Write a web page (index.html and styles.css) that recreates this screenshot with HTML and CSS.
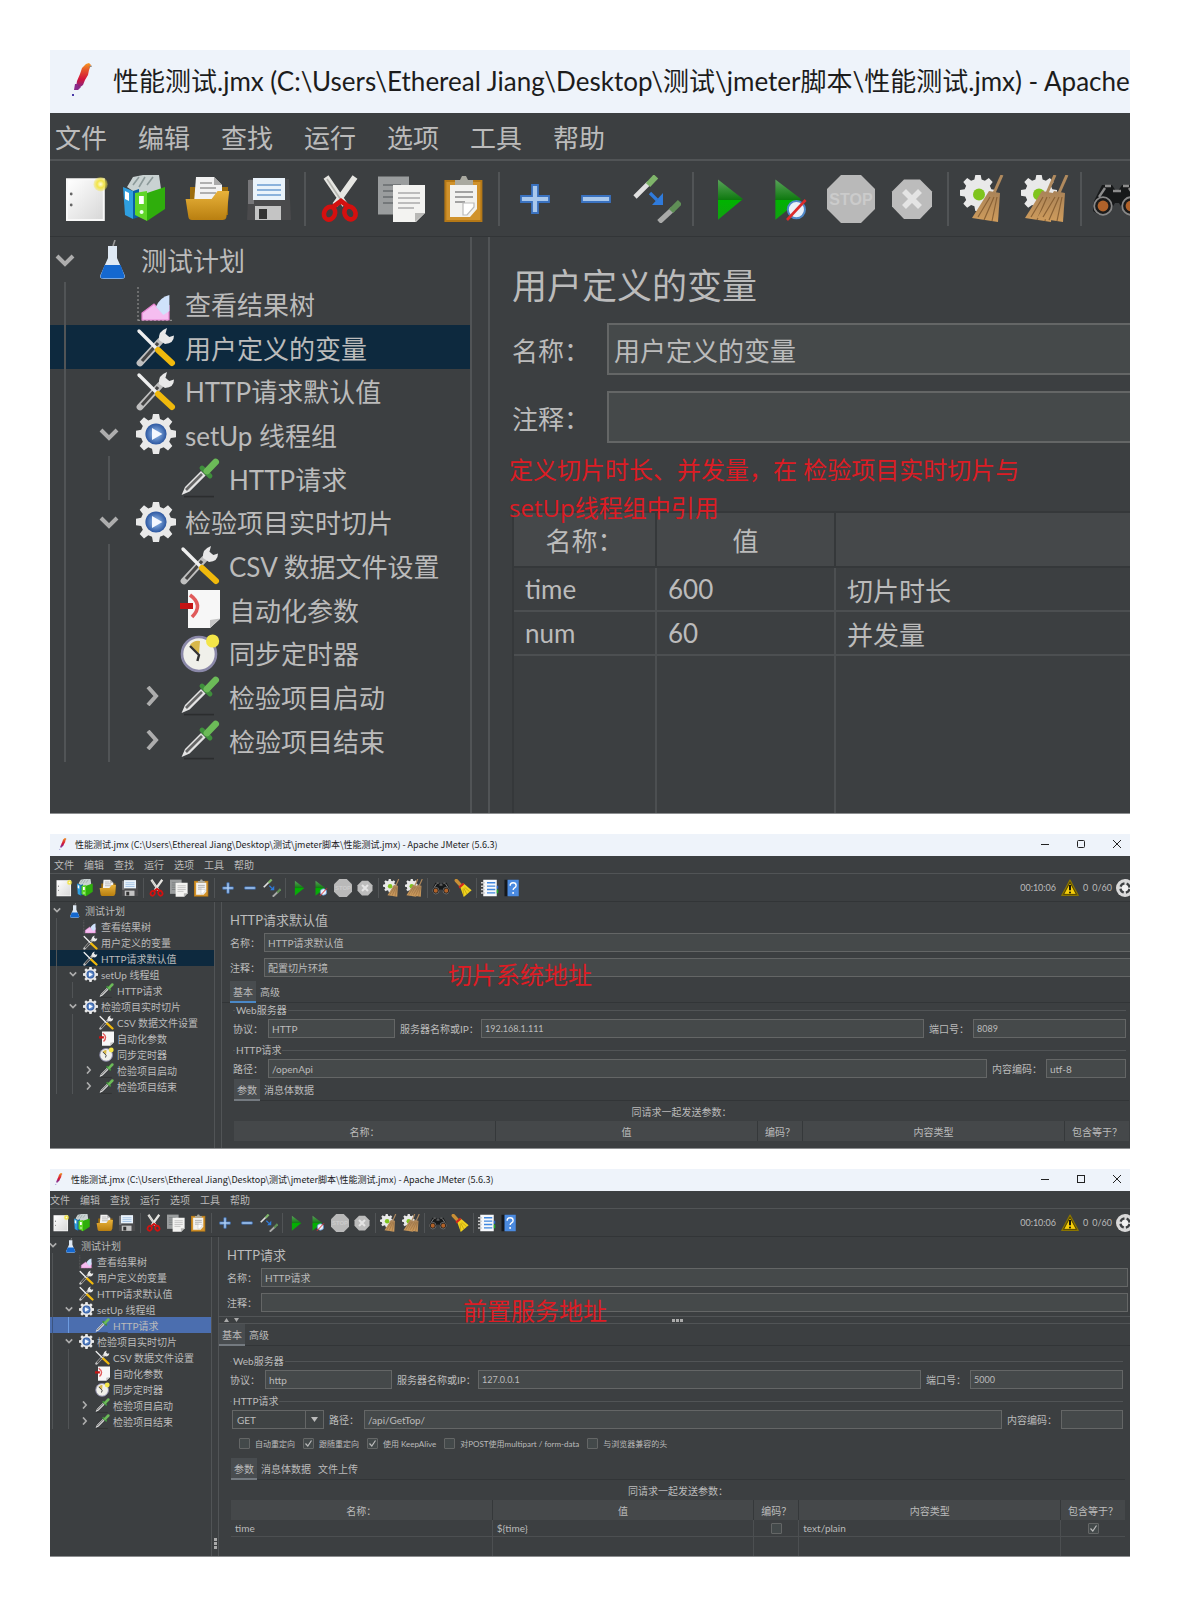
FILE: index.html
```html
<!DOCTYPE html>
<html lang="zh-CN">
<head>
<meta charset="utf-8">
<title>JMeter 性能测试</title>
<link rel="stylesheet" href="styles.css">
</head>
<body>
<svg class="sprite" aria-hidden="true">
  <defs>
    <linearGradient id="g-feather" x1="0" y1="0" x2="0" y2="1"><stop offset="0" stop-color="#f69923"/><stop offset=".3" stop-color="#e4502a"/><stop offset=".65" stop-color="#d2143c"/><stop offset="1" stop-color="#7d2a8c"/></linearGradient>
    <linearGradient id="g-page" x1="0" y1="0" x2="1" y2="1"><stop offset="0" stop-color="#fff"/><stop offset="1" stop-color="#d8d8d8"/></linearGradient>
    <linearGradient id="g-gold" x1="0" y1="0" x2="0" y2="1"><stop offset="0" stop-color="#e8b23a"/><stop offset="1" stop-color="#b97f10"/></linearGradient>
    <linearGradient id="g-play" x1="0" y1="0" x2="0" y2="1"><stop offset="0" stop-color="#5aa35a"/><stop offset=".5" stop-color="#0f7a10"/><stop offset=".52" stop-color="#00b400"/><stop offset="1" stop-color="#12a012"/></linearGradient>
    <linearGradient id="g-broom" x1="0" y1="0" x2="0" y2="1"><stop offset="0" stop-color="#a98358"/><stop offset="1" stop-color="#cf9c5c"/></linearGradient>
    <radialGradient id="g-blue"><stop offset="0" stop-color="#9cc3f0"/><stop offset="1" stop-color="#2b56a0"/></radialGradient>
    <radialGradient id="g-sun"><stop offset="0" stop-color="#fffde0"/><stop offset=".5" stop-color="#f3e548"/><stop offset="1" stop-color="#f3e548" stop-opacity=".3"/></radialGradient>
  </defs>

  <symbol id="i-feather" viewBox="0 0 20 34"><path d="m14 1 3-1 2 2-2 5-1 5-3 5-2 5-4 3-3-1 1-6 3-7 2-6z" fill="url(#g-feather)"/><path d="M3 21h3v3h3l-3 3H2z" fill="#8a2a8a"/><rect x="0" y="31" width="2" height="2" fill="#4a3aa8"/><path d="m17 4 3-1" stroke="#888"/></symbol>

  <symbol id="i-new" viewBox="0 0 24 24"><path d="M2 1.600h19.400V23H2z" fill="#f8f8f8"/><path d="M3 2.600h17.400V22H3z" fill="url(#g-page)"/><circle cx="4.600" cy="9.500" r=".7" fill="#666"/><circle cx="4.600" cy="15" r=".7" fill="#666"/><circle cx="19.300" cy="4.600" r="3.600" fill="url(#g-sun)"/></symbol>

  <symbol id="i-templates" viewBox="0 0 24 24"><path d="M2 6 5 1l5-1 8 0 1 7-8 5z" fill="#c9d2d2"/><path d="m5 5 3-4m0 5 3-5m1 4 3-4" stroke="#8c9a9a" stroke-width=".8"/><path d="M0 6l5 2v14l-4-2z" fill="#2f9fe0"/><path d="m5 8 3-1v14l-3 1z" fill="#0b5fa5"/><path d="m1 8 2 1v4l-2-1z" fill="#fff"/><path d="m6 9 6-1 0 15-6-3z" fill="#5fd628"/><path d="m12 9 9-3v11l-9 6z" fill="#2fae0c"/><path d="M8 10.500h2.400v4H8z" fill="#fff"/><circle cx="9.300" cy="18.500" r="1" fill="#eaffea"/></symbol>

  <symbol id="i-open" viewBox="0 0 24 24"><path d="M3 6h19v14H3z" fill="#9c6c0c"/><path d="M6 1h9l4 4v9H5z" fill="#f2f2f2"/><path d="M8 4h6M8 6.500h8M8 9h8" stroke="#999" stroke-width=".8"/><path d="M15 1v4h4z" fill="#aaa"/><path d="M.8 12h13l3-4h3.600l2.200 0-1.400 13q-.2 1.500-2 1.500H4q-1.600 0-1.800-1.500z" fill="url(#g-gold)"/></symbol>

  <symbol id="i-save" viewBox="0 0 24 24"><path d="M2 2h20l1 20.500H1z" fill="#4a4a4c"/><path d="M1.500 2.500h3v12h-3z" fill="#77777a"/><path d="M4 1.500h16v11H4z" fill="#eaf3fb"/><path d="M6 5h12M6 7.500h12M6 10h12" stroke="#8bb2dc" stroke-width=".9"/><path d="M5 15.500h13v7H5z" fill="#c4c4c4"/><path d="M7 17h4v5H7z" fill="#333"/></symbol>

  <symbol id="i-cut" viewBox="0 0 24 24"><path d="M4.500 1 14 15M19 1 9 15" stroke="#e6e6e2" stroke-width="3"/><path d="m5 2 8 12" stroke="#b5b5b0" stroke-width=".8"/><ellipse cx="6.300" cy="19" rx="2.700" ry="3.300" fill="none" stroke="#d4100f" stroke-width="2.300" transform="rotate(25 6 19)"/><ellipse cx="16.500" cy="19" rx="2.700" ry="3.300" fill="none" stroke="#d4100f" stroke-width="2.300" transform="rotate(-25 16.500 19)"/><path d="m8 16 4-3 4 3" fill="none" stroke="#d4100f" stroke-width="2.400"/></symbol>

  <symbol id="i-copy" viewBox="0 0 24 24"><path d="M0 .8h15.500v19H0z" fill="#9a9d9e"/><path d="M2.500 5h9M2.500 8h5M2.500 11h5M2.500 14h5" stroke="#74787a"/><path d="M7.500 5h16v14l-4.500 4.500H7.500z" fill="#f3f3f1"/><path d="M10 9h11M10 11.500h11M10 14h11M10 16.500h8" stroke="#aaa" stroke-width=".8"/><path d="M18.500 23.500V19h5z" fill="#b8b8b6"/></symbol>

  <symbol id="i-paste" viewBox="0 0 24 24"><path d="M2.700 2.500h19v21h-19z" fill="#b57816"/><path d="M3.700 3.500h17v19h-17z" fill="#d0922c"/><path d="M5.500 5h13.500v12l-3.500 4H5.500z" fill="#f2f2f0"/><path d="M8 8.500h9M8 11h9M8 13.500h5" stroke="#888" stroke-width=".8"/><path d="M12 14h5.500v2L14 20h-2z" fill="#fff" stroke="#bbb" stroke-width=".6"/><path d="M8 5V2.500h2.500l1-2h2l1 2H17V5z" fill="#a9a9a0"/></symbol>

  <symbol id="i-plus" viewBox="0 0 24 24"><path d="M10.500 5h3v5.500H19v3h-5.500V19h-3v-5.500H5v-3h5.500z" fill="#a9c8ec" stroke="#3a72c0" stroke-width=".9"/></symbol>
  <symbol id="i-minus" viewBox="0 0 24 24"><path d="M5 10.500h14v3H5z" fill="#a9c8ec" stroke="#3a72c0" stroke-width=".9"/></symbol>

  <symbol id="i-toggle" viewBox="0 0 24 24"><path d="M1 11 8 4" stroke="#e0e0e0" stroke-width="2.300"/><path d="m7.500 5 4-4.300" stroke="#7fb56a" stroke-width="3"/><path d="M13 23.500 20 17" stroke="#a9aaa9" stroke-width="2.600"/><path d="m19 18 4.500-4.500" stroke="#5f8f56" stroke-width="3"/><path d="m8.500 9 3.500 3.500" stroke="#2f7bdc" stroke-width="1.600"/><path d="M15 9v6H9.500z" fill="#2f7bdc"/></symbol>

  <symbol id="i-play" viewBox="0 0 24 24"><path d="M6.500 2.200 19 12 6.500 22.400z" fill="url(#g-play)"/></symbol>
  <symbol id="i-playnow" viewBox="0 0 24 24"><path d="M4.700 2.200 17.500 12 4.700 22.400z" fill="url(#g-play)"/><circle cx="15.200" cy="17.300" r="4.300" fill="#e9f1fa" stroke="#4f88c8"/><path d="m10.500 22.500 9.300-10" stroke="#dc2b2b" stroke-width="1.300"/></symbol>

  <symbol id="i-stop" viewBox="0 0 24 24"><path d="M7 0h10l7 7v10l-7 7H7l-7-7V7z" fill="#b9b9b9"/></symbol>
  <symbol id="i-shutdown" viewBox="0 0 24 24"><path d="M8 2.200h8l6 6v7.600l-6 6.200H8l-6-6.200V8.200z" fill="#bcbcbc"/><path d="m8 8 8 8m0-8-8 8" stroke="#e4e4e4" stroke-width="2.800"/></symbol>

  <symbol id="i-cog" viewBox="0 0 24 24"><path d="M10.200 0h3.600l.6 3 2.200.9L19.200 2l2.600 2.700-1.900 2.500 1 2.300 3.100.5v3.900l-3.100.5-1 2.300 1.900 2.500-2.600 2.700-2.600-1.900-2.200.9-.6 3.100h-3.600l-.6-3.100-2.200-.9-2.600 1.900-2.600-2.700 1.900-2.500-1-2.300L0 13.900V10l3.100-.5 1-2.300-1.900-2.500L4.800 2l2.600 1.900L9.600 3z" fill="#e9e9e9"/></symbol>
  <symbol id="i-broom1" viewBox="0 0 24 24"><path d="M21 0 17 9" stroke="#b08a5e" stroke-width="1.500"/><path d="M14.500 8 20 9l-1 14.500L6 21.500z" fill="url(#g-broom)"/><path d="M15 11 9 21m8-10-5 11.500M18.500 11 16 23" stroke="#8a6236" stroke-width=".6"/></symbol>

  <symbol id="i-clear" viewBox="0 0 24 24"><use href="#i-cog" width="18" height="18"/><circle cx="9.500" cy="9.800" r="3" fill="#7fc41c"/><use href="#i-broom1" width="24" height="24"/></symbol>
  <symbol id="i-clearall" viewBox="0 0 24 24"><use href="#i-cog" width="18" height="18"/><circle cx="9" cy="9.800" r="3" fill="#7fc41c"/><use href="#i-broom1" x="-4" width="24" height="24"/><use href="#i-broom1" x="2" width="24" height="24"/></symbol>

  <symbol id="i-find" viewBox="0 0 24 24"><path d="M4.500 5h5l2 3h1l2-3h5l4 8 .5 5-3 2-5-1-3-5h-2l-3 5-5 1-3-2 .5-5z" fill="#17191a"/><path d="M3 11 6 6.500m12 0 3 4.500M10 8h4M6 5.500h3m6 0h3" stroke="#8c8c8c" stroke-width="1.200"/><circle cx="5" cy="15.500" r="4.400" fill="#1b1b1b" stroke="#888" stroke-width=".9"/><circle cx="5" cy="15.500" r="2.700" fill="#b0622a"/><circle cx="19" cy="15.500" r="4.400" fill="#1b1b1b" stroke="#888" stroke-width=".9"/><circle cx="19" cy="15.500" r="2.700" fill="#b0622a"/></symbol>

  <symbol id="i-sweep" viewBox="0 0 24 24"><path d="m3 2 6 6.500" stroke="#c98f35" stroke-width="4.500" stroke-linecap="round"/><path d="M8 10 13 6l10.500 9L13 24z" fill="#efd31f"/><path d="m13 22-1-9m5 7-4-8m8 5-7-6" stroke="#c2a20c"/><path d="m6 10 6-5 2 2-6.500 5.500z" fill="#d2281e"/></symbol>

  <symbol id="i-list" viewBox="0 0 24 24"><path d="M3 1h18v22H3z" fill="#f6f8fb"/><path d="M8 5h11M8 9.500h11M8 14h11M8 18.500h11" stroke="#3f86de" stroke-width="1.800"/><path d="M0 5h5M0 9.500h5M0 14h5M0 18.500h5" stroke="#c9c9c9" stroke-width="2"/><path d="M21 9h2v4h-2z" fill="#2a6ad0"/><path d="M21 14h2v5h-2z" fill="#1fae2a"/></symbol>
  <symbol id="i-help" viewBox="0 0 24 24"><path d="M2 1h5v22H2z" fill="#15181c"/><path d="M6 1h15v22H6z" fill="#4a8ae0"/><path d="M9.500 9q0-4 4-4t4 3.600q0 2-2.200 3.200-1.800 1-1.800 3" fill="none" stroke="#fff" stroke-width="1.800"/><circle cx="13.500" cy="18.500" r="1.300" fill="#fff"/></symbol>

  <symbol id="i-warn" viewBox="0 0 24 24"><path d="M12 1.500 23 22H1z" fill="#8a7400" stroke="#8a7400" stroke-width="1.600" stroke-linejoin="round"/><path d="M12 4.500 20.500 20.500h-17z" fill="#f5cd0a" stroke="#2c2600"/><path d="M12 8v7" stroke="#111" stroke-width="2.600"/><circle cx="12" cy="18" r="1.300" fill="#111"/></symbol>
  <symbol id="i-round" viewBox="0 0 24 24"><circle cx="12" cy="12" r="12" fill="#d9d9d9"/><circle cx="12" cy="12" r="6.200" fill="none" stroke="#3c3f41" stroke-width="3" stroke-dasharray="6.740 3" stroke-dashoffset="-1.500"/><circle cx="12" cy="12" r="4" fill="#f2f2f2"/></symbol>

  <symbol id="t-flask" viewBox="0 0 20 20"><path d="m10.500 3 1-3" stroke="#999" stroke-width=".8"/><path d="M8 3h4.500v6l4 9q0 1.500-2 1.500H6q-2 0-2-1.500l4-9z" fill="#dfe9f4"/><path d="M6.300 12.500h8l2 5.500q0 1.300-1.500 1.300H5.700q-1.500 0-1.500-1.300z" fill="#1468d0"/></symbol>
  <symbol id="t-chart" viewBox="0 0 20 20"><path d="M1 2v17M1 18.700h17" stroke="#8c8c8c" stroke-width=".6" stroke-dasharray="1 1"/><path d="M3 18.500V15l6-4.500 4 4 3.500-3v7z" fill="#f5bdf0" stroke="#e583d0" stroke-width=".6"/><path d="M10 12q2-5 6.700-6v8l-3 2z" fill="#cfe2fb"/></symbol>
  <symbol id="t-tools" viewBox="0 0 20 20"><path d="m2 18 12-13" stroke="#bfbfbf" stroke-width="3.400" stroke-linecap="round"/><path d="m3 17 8-9" stroke="#444" stroke-width="1.600"/><path d="M11.500 6.500q-.5-4.500 4-6l-.8 3 2 1.500 2.300-.8q0 4-4.500 4.300z" fill="#e8e8e8"/><path d="m1.500 2 9 9" stroke="#efefef" stroke-width="1.700" stroke-linecap="round"/><path d="m11 11.500 7 6.500" stroke="#f0b90c" stroke-width="3" stroke-linecap="round"/></symbol>
  <symbol id="t-gear" viewBox="0 0 20 20"><use href="#i-cog" width="20" height="20"/><circle cx="10" cy="10" r="5.300" fill="url(#g-blue)"/><path d="m8 7 5.200 3L8 13z" fill="#f4f8ff"/></symbol>
  <symbol id="t-dropper" viewBox="0 0 20 20"><path d="M2 19.300h15" stroke="#2b2d2e" stroke-width=".8"/><path d="M.8 18.500 2.500 14.500l8-8 2.300 2.300-8 8z" fill="#e4e4e4"/><path d="m3 16 8-8" stroke="#666" stroke-width="1.300"/><path d="m11 5 4 4" stroke="#3f8f3c" stroke-width="2.400" stroke-linecap="round"/><path d="m13.500 6.500 4.300-4.500" stroke="#6cbb58" stroke-width="3.400" stroke-linecap="round"/></symbol>
  <symbol id="t-param" viewBox="0 0 20 20"><path d="M4 .5h16V15l-5 4.500H4z" fill="#f7f7f7"/><path d="M15 19.500V15.500l5-.8z" fill="#c4c4c4"/><path d="M5 3q7 5 1 11" fill="none" stroke="#e05a5a" stroke-width="1.800"/><path d="M0 8.500h6.500" stroke="#c41414" stroke-width="3"/></symbol>
  <symbol id="t-timer" viewBox="0 0 20 20"><circle cx="9.500" cy="10.500" r="8.500" fill="#f0f0ea" stroke="#8a88a8" stroke-width="1.300"/><path d="M9.500 10.500 5 6q2-2.500 5-2z" fill="#d8b84a"/><path d="M5 6.500 9.500 11l-.8 3" fill="none" stroke="#333" stroke-width="1.200"/><circle cx="16.300" cy="4" r="3.300" fill="#f3e548"/></symbol>
  <symbol id="c-down" viewBox="0 0 20 20"><path d="m2 6 8 8 8-8" fill="none" stroke="#adadad" stroke-width="4"/></symbol>
  <symbol id="c-right" viewBox="0 0 20 20"><path d="m5 1 8 9-8 9" fill="none" stroke="#adadad" stroke-width="4"/></symbol>
</svg>

<main class="page">

<section class="win win-large">
  <header class="titlebar">
    <svg class="feather"><use href="#i-feather"/></svg>
    <span class="title">性能测试.jmx (C:\Users\Ethereal Jiang\Desktop\测试\jmeter脚本\性能测试.jmx) - Apache</span>
  </header>
  <nav class="menubar"><button>文件</button><button>编辑</button><button>查找</button><button>运行</button><button>选项</button><button>工具</button><button>帮助</button></nav>
  <div class="toolbar">
    <button aria-label="新建"><svg><use href="#i-new"/></svg></button>
    <button aria-label="模板"><svg><use href="#i-templates"/></svg></button>
    <button aria-label="打开"><svg><use href="#i-open"/></svg></button>
    <button aria-label="保存"><svg><use href="#i-save"/></svg></button>
    <span class="sep"></span>
    <button aria-label="剪切"><svg><use href="#i-cut"/></svg></button>
    <button aria-label="复制"><svg><use href="#i-copy"/></svg></button>
    <button aria-label="粘贴"><svg><use href="#i-paste"/></svg></button>
    <span class="sep"></span>
    <button aria-label="展开"><svg><use href="#i-plus"/></svg></button>
    <button aria-label="折叠"><svg><use href="#i-minus"/></svg></button>
    <button aria-label="切换"><svg><use href="#i-toggle"/></svg></button>
    <span class="sep"></span>
    <button aria-label="启动"><svg><use href="#i-play"/></svg></button>
    <button aria-label="不停顿开始"><svg><use href="#i-playnow"/></svg></button>
    <button aria-label="停止"><svg viewBox="0 0 24 24"><use href="#i-stop" width="24" height="24"/><text x="12" y="15" text-anchor="middle" class="stop-word">STOP</text></svg></button>
    <button aria-label="关闭"><svg><use href="#i-shutdown"/></svg></button>
    <span class="sep"></span>
    <button aria-label="清除"><svg><use href="#i-clear"/></svg></button>
    <button aria-label="清除全部"><svg><use href="#i-clearall"/></svg></button>
    <span class="sep"></span>
    <button aria-label="查找"><svg><use href="#i-find"/></svg></button>
  </div>
  <div class="body">
    <ul class="tree">
      <li><svg class="chev"><use href="#c-down"/></svg><svg class="ico"><use href="#t-flask"/></svg><span>测试计划</span></li>
      <li class="l1"><i class="chev"></i><svg class="ico"><use href="#t-chart"/></svg><span>查看结果树</span></li>
      <li class="l1 selected"><i class="chev"></i><svg class="ico"><use href="#t-tools"/></svg><span>用户定义的变量</span></li>
      <li class="l1"><i class="chev"></i><svg class="ico"><use href="#t-tools"/></svg><span>HTTP请求默认值</span></li>
      <li class="l1"><svg class="chev"><use href="#c-down"/></svg><svg class="ico"><use href="#t-gear"/></svg><span>setUp 线程组</span></li>
      <li class="l2"><i class="chev"></i><svg class="ico"><use href="#t-dropper"/></svg><span>HTTP请求</span></li>
      <li class="l1"><svg class="chev"><use href="#c-down"/></svg><svg class="ico"><use href="#t-gear"/></svg><span>检验项目实时切片</span></li>
      <li class="l2"><i class="chev"></i><svg class="ico"><use href="#t-tools"/></svg><span>CSV 数据文件设置</span></li>
      <li class="l2"><i class="chev"></i><svg class="ico"><use href="#t-param"/></svg><span>自动化参数</span></li>
      <li class="l2"><i class="chev"></i><svg class="ico"><use href="#t-timer"/></svg><span>同步定时器</span></li>
      <li class="l2"><svg class="chev"><use href="#c-right"/></svg><svg class="ico"><use href="#t-dropper"/></svg><span>检验项目启动</span></li>
      <li class="l2"><svg class="chev"><use href="#c-right"/></svg><svg class="ico"><use href="#t-dropper"/></svg><span>检验项目结束</span></li>
    </ul>
    <div class="divider"></div>
    <div class="pane">
      <h2>用户定义的变量</h2>
      <div class="field"><label for="a-name">名称：</label><input id="a-name" class="grow" value="用户定义的变量"></div>
      <div class="field"><label for="a-note">注释：</label><input id="a-note" class="grow"></div>
      <table class="grid vars">
        <colgroup><col class="v-name"><col class="v-value"><col></colgroup>
        <thead><tr><th>名称：</th><th>值</th><th></th></tr></thead>
        <tbody>
          <tr><td>time</td><td>600</td><td>切片时长</td></tr>
          <tr><td>num</td><td>60</td><td>并发量</td></tr>
          <tr class="filler"><td></td><td></td><td></td></tr>
        </tbody>
      </table>
    </div>
  </div>
  <p class="note note-a">定义切片时长、并发量，在 检验项目实时切片与<br>setUp线程组中引用</p>
</section>

<section class="win win-small">
  <header class="titlebar">
    <svg class="feather"><use href="#i-feather"/></svg>
    <span class="title">性能测试.jmx (C:\Users\Ethereal Jiang\Desktop\测试\jmeter脚本\性能测试.jmx) - Apache JMeter (5.6.3)</span>
    <span class="controls">
      <button aria-label="最小化"><svg viewBox="0 0 10 10"><path d="M1 5.500h8"/></svg></button>
      <button aria-label="最大化"><svg viewBox="0 0 10 10"><rect x="1.500" y="1.500" width="7" height="7" rx="1"/></svg></button>
      <button aria-label="关闭"><svg viewBox="0 0 10 10"><path d="m1 1 8 8m0-8-8 8"/></svg></button>
    </span>
  </header>
  <nav class="menubar"><button>文件</button><button>编辑</button><button>查找</button><button>运行</button><button>选项</button><button>工具</button><button>帮助</button></nav>
  <div class="toolbar">
    <button aria-label="新建"><svg><use href="#i-new"/></svg></button>
    <button aria-label="模板"><svg><use href="#i-templates"/></svg></button>
    <button aria-label="打开"><svg><use href="#i-open"/></svg></button>
    <button aria-label="保存"><svg><use href="#i-save"/></svg></button>
    <span class="sep"></span>
    <button aria-label="剪切"><svg><use href="#i-cut"/></svg></button>
    <button aria-label="复制"><svg><use href="#i-copy"/></svg></button>
    <button aria-label="粘贴"><svg><use href="#i-paste"/></svg></button>
    <span class="sep"></span>
    <button aria-label="展开"><svg><use href="#i-plus"/></svg></button>
    <button aria-label="折叠"><svg><use href="#i-minus"/></svg></button>
    <button aria-label="切换"><svg><use href="#i-toggle"/></svg></button>
    <span class="sep"></span>
    <button aria-label="启动"><svg><use href="#i-play"/></svg></button>
    <button aria-label="不停顿开始"><svg><use href="#i-playnow"/></svg></button>
    <button aria-label="停止"><svg viewBox="0 0 24 24"><use href="#i-stop" width="24" height="24"/><text x="12" y="15" text-anchor="middle" class="stop-word">STOP</text></svg></button>
    <button aria-label="关闭"><svg><use href="#i-shutdown"/></svg></button>
    <span class="sep"></span>
    <button aria-label="清除"><svg><use href="#i-clear"/></svg></button>
    <button aria-label="清除全部"><svg><use href="#i-clearall"/></svg></button>
    <span class="sep"></span>
    <button aria-label="查找"><svg><use href="#i-find"/></svg></button>
    <button aria-label="清除查找"><svg><use href="#i-sweep"/></svg></button>
    <span class="sep"></span>
    <button aria-label="函数助手"><svg><use href="#i-list"/></svg></button>
    <button aria-label="帮助"><svg><use href="#i-help"/></svg></button>
    <div class="status"><span class="clock">00:10:06</span><svg><use href="#i-warn"/></svg><span>0</span><span>0/60</span><svg><use href="#i-round"/></svg></div>
  </div>
  <div class="body">
    <ul class="tree">
      <li><svg class="chev"><use href="#c-down"/></svg><svg class="ico"><use href="#t-flask"/></svg><span>测试计划</span></li>
      <li class="l1"><i class="chev"></i><svg class="ico"><use href="#t-chart"/></svg><span>查看结果树</span></li>
      <li class="l1"><i class="chev"></i><svg class="ico"><use href="#t-tools"/></svg><span>用户定义的变量</span></li>
      <li class="l1 selected"><i class="chev"></i><svg class="ico"><use href="#t-tools"/></svg><span>HTTP请求默认值</span></li>
      <li class="l1"><svg class="chev"><use href="#c-down"/></svg><svg class="ico"><use href="#t-gear"/></svg><span>setUp 线程组</span></li>
      <li class="l2"><i class="chev"></i><svg class="ico"><use href="#t-dropper"/></svg><span>HTTP请求</span></li>
      <li class="l1"><svg class="chev"><use href="#c-down"/></svg><svg class="ico"><use href="#t-gear"/></svg><span>检验项目实时切片</span></li>
      <li class="l2"><i class="chev"></i><svg class="ico"><use href="#t-tools"/></svg><span>CSV 数据文件设置</span></li>
      <li class="l2"><i class="chev"></i><svg class="ico"><use href="#t-param"/></svg><span>自动化参数</span></li>
      <li class="l2"><i class="chev"></i><svg class="ico"><use href="#t-timer"/></svg><span>同步定时器</span></li>
      <li class="l2"><svg class="chev"><use href="#c-right"/></svg><svg class="ico"><use href="#t-dropper"/></svg><span>检验项目启动</span></li>
      <li class="l2"><svg class="chev"><use href="#c-right"/></svg><svg class="ico"><use href="#t-dropper"/></svg><span>检验项目结束</span></li>
    </ul>
    <div class="divider"></div>
    <div class="pane">
      <h2>HTTP请求默认值</h2>
      <div class="field"><label for="b-name">名称：</label><input id="b-name" class="grow bleed" value="HTTP请求默认值"></div>
      <div class="field"><label for="b-note">注释：</label><input id="b-note" class="grow bleed" value="配置切片环境"></div>
      <div class="tabs tabs-main"><button class="on focus">基本</button><button>高级</button></div>
      <fieldset>
        <legend>Web服务器</legend>
        <div class="field"><label for="b-proto">协议：</label><input id="b-proto" class="proto" value="HTTP"><label for="b-host" class="w-host">服务器名称或IP：</label><input id="b-host" class="grow num" value="192.168.1.111"><label for="b-port" class="w-port">端口号：</label><input id="b-port" class="port num" value="8089"></div>
      </fieldset>
      <fieldset>
        <legend>HTTP请求</legend>
        <div class="field"><label for="b-path">路径：</label><input id="b-path" class="grow" value="/openApi"><label for="b-enc" class="w-enc">内容编码：</label><input id="b-enc" class="enc" value="utf-8"></div>
      </fieldset>
      <div class="params">
        <div class="tabs"><button class="on">参数</button><button>消息体数据</button></div>
        <p class="caption">同请求一起发送参数：</p>
        <table class="grid">
          <colgroup><col><col><col class="p-enc"><col><col class="p-eq"></colgroup>
          <thead><tr><th>名称：</th><th>值</th><th>编码？</th><th>内容类型</th><th>包含等于？</th></tr></thead>
        </table>
      </div>
    </div>
  </div>
  <p class="note note-b">切片系统地址</p>
</section>

<section class="win win-small shifted">
  <header class="titlebar">
    <svg class="feather"><use href="#i-feather"/></svg>
    <span class="title">性能测试.jmx (C:\Users\Ethereal Jiang\Desktop\测试\jmeter脚本\性能测试.jmx) - Apache JMeter (5.6.3)</span>
    <span class="controls">
      <button aria-label="最小化"><svg viewBox="0 0 10 10"><path d="M1 5.500h8"/></svg></button>
      <button aria-label="最大化"><svg viewBox="0 0 10 10"><rect x="1.500" y="1.500" width="7" height="7"/></svg></button>
      <button aria-label="关闭"><svg viewBox="0 0 10 10"><path d="m1 1 8 8m0-8-8 8"/></svg></button>
    </span>
  </header>
  <nav class="menubar"><button>文件</button><button>编辑</button><button>查找</button><button>运行</button><button>选项</button><button>工具</button><button>帮助</button></nav>
  <div class="toolbar">
    <button aria-label="新建"><svg><use href="#i-new"/></svg></button>
    <button aria-label="模板"><svg><use href="#i-templates"/></svg></button>
    <button aria-label="打开"><svg><use href="#i-open"/></svg></button>
    <button aria-label="保存"><svg><use href="#i-save"/></svg></button>
    <span class="sep"></span>
    <button aria-label="剪切"><svg><use href="#i-cut"/></svg></button>
    <button aria-label="复制"><svg><use href="#i-copy"/></svg></button>
    <button aria-label="粘贴"><svg><use href="#i-paste"/></svg></button>
    <span class="sep"></span>
    <button aria-label="展开"><svg><use href="#i-plus"/></svg></button>
    <button aria-label="折叠"><svg><use href="#i-minus"/></svg></button>
    <button aria-label="切换"><svg><use href="#i-toggle"/></svg></button>
    <span class="sep"></span>
    <button aria-label="启动"><svg><use href="#i-play"/></svg></button>
    <button aria-label="不停顿开始"><svg><use href="#i-playnow"/></svg></button>
    <button aria-label="停止"><svg viewBox="0 0 24 24"><use href="#i-stop" width="24" height="24"/><text x="12" y="15" text-anchor="middle" class="stop-word">STOP</text></svg></button>
    <button aria-label="关闭"><svg><use href="#i-shutdown"/></svg></button>
    <span class="sep"></span>
    <button aria-label="清除"><svg><use href="#i-clear"/></svg></button>
    <button aria-label="清除全部"><svg><use href="#i-clearall"/></svg></button>
    <span class="sep"></span>
    <button aria-label="查找"><svg><use href="#i-find"/></svg></button>
    <button aria-label="清除查找"><svg><use href="#i-sweep"/></svg></button>
    <span class="sep"></span>
    <button aria-label="函数助手"><svg><use href="#i-list"/></svg></button>
    <button aria-label="帮助"><svg><use href="#i-help"/></svg></button>
    <div class="status"><span class="clock">00:10:06</span><svg><use href="#i-warn"/></svg><span>0</span><span>0/60</span><svg><use href="#i-round"/></svg></div>
  </div>
  <div class="body">
    <ul class="tree">
      <li><svg class="chev"><use href="#c-down"/></svg><svg class="ico"><use href="#t-flask"/></svg><span>测试计划</span></li>
      <li class="l1"><i class="chev"></i><svg class="ico"><use href="#t-chart"/></svg><span>查看结果树</span></li>
      <li class="l1"><i class="chev"></i><svg class="ico"><use href="#t-tools"/></svg><span>用户定义的变量</span></li>
      <li class="l1"><i class="chev"></i><svg class="ico"><use href="#t-tools"/></svg><span>HTTP请求默认值</span></li>
      <li class="l1"><svg class="chev"><use href="#c-down"/></svg><svg class="ico"><use href="#t-gear"/></svg><span>setUp 线程组</span></li>
      <li class="l2 selected active"><i class="chev"></i><svg class="ico"><use href="#t-dropper"/></svg><span>HTTP请求</span></li>
      <li class="l1"><svg class="chev"><use href="#c-down"/></svg><svg class="ico"><use href="#t-gear"/></svg><span>检验项目实时切片</span></li>
      <li class="l2"><i class="chev"></i><svg class="ico"><use href="#t-tools"/></svg><span>CSV 数据文件设置</span></li>
      <li class="l2"><i class="chev"></i><svg class="ico"><use href="#t-param"/></svg><span>自动化参数</span></li>
      <li class="l2"><i class="chev"></i><svg class="ico"><use href="#t-timer"/></svg><span>同步定时器</span></li>
      <li class="l2"><svg class="chev"><use href="#c-right"/></svg><svg class="ico"><use href="#t-dropper"/></svg><span>检验项目启动</span></li>
      <li class="l2"><svg class="chev"><use href="#c-right"/></svg><svg class="ico"><use href="#t-dropper"/></svg><span>检验项目结束</span></li>
    </ul>
    <div class="divider"><svg class="grip" viewBox="0 0 3 11"><path d="M0 0h3v3H0zM0 4h3v3H0zM0 8h3v3H0z"/></svg></div>
    <div class="pane">
      <h2>HTTP请求</h2>
      <div class="field"><label for="c-name">名称：</label><input id="c-name" class="grow" value="HTTP请求"></div>
      <div class="field"><label for="c-note">注释：</label><input id="c-note" class="grow"></div>
      <div class="splitter"><svg class="arrows" viewBox="0 0 16 4"><path d="M0 4 2.500 0 5 4zM10 0h5l-2.500 4z"/></svg><svg class="dots" viewBox="0 0 11 3"><path d="M0 0h3v3H0zM4 0h3v3H4zM8 0h3v3H8z"/></svg></div>
      <div class="tabs tabs-main"><button class="on">基本</button><button>高级</button></div>
      <fieldset class="spaced">
        <legend>Web服务器</legend>
        <div class="field"><label for="c-proto">协议：</label><input id="c-proto" class="proto" value="http"><label for="c-host" class="w-host">服务器名称或IP：</label><input id="c-host" class="grow num" value="127.0.0.1"><label for="c-port" class="w-port">端口号：</label><input id="c-port" class="port num" value="5000"></div>
      </fieldset>
      <fieldset>
        <legend>HTTP请求</legend>
        <div class="field"><select class="method" aria-label="方法"><option>GET</option></select><label for="c-path" class="w-path">路径：</label><input id="c-path" class="grow" value="/api/GetTop/"><label for="c-enc" class="w-enc">内容编码：</label><input id="c-enc" class="enc"></div>
        <div class="checks">
          <label><input type="checkbox">自动重定向</label>
          <label><input type="checkbox" checked>跟随重定向</label>
          <label><input type="checkbox" checked>使用 KeepAlive</label>
          <label><input type="checkbox">对POST使用multipart / form-data</label>
          <label><input type="checkbox">与浏览器兼容的头</label>
        </div>
      </fieldset>
      <div class="params">
        <div class="tabs"><button class="on">参数</button><button>消息体数据</button><button>文件上传</button></div>
        <p class="caption">同请求一起发送参数：</p>
        <table class="grid">
          <colgroup><col><col><col class="p-enc"><col><col class="p-eq"></colgroup>
          <thead><tr><th>名称：</th><th>值</th><th>编码？</th><th>内容类型</th><th>包含等于？</th></tr></thead>
          <tbody>
            <tr><td>time</td><td>${time}</td><td class="mid"><input type="checkbox" aria-label="编码"></td><td>text/plain</td><td class="mid"><input type="checkbox" aria-label="包含等于" checked></td></tr>
            <tr class="filler"><td></td><td></td><td></td><td></td><td></td></tr>
          </tbody>
        </table>
      </div>
    </div>
  </div>
  <p class="note note-c">前置服务地址</p>
</section>

</main>
</body>
</html>
```
FILE: styles.css
```css
* { box-sizing: border-box; }

body {
  margin: 0;
  background: #fff;
  color: #bbb;
  font-family: "Lato", "Noto Sans CJK SC", sans-serif;
}

h2, p, ul { margin: 0; padding: 0; font-weight: normal; }
button, input, select { font: inherit; color: inherit; }
button { padding: 0; border: 0; background: none; white-space: nowrap; }
svg { display: block; flex: none; }
.sprite { position: absolute; width: 0; height: 0; }

.page {
  display: flex;
  flex-direction: column;
  gap: 20px;
  padding: 50px 50px 48px;
}

/* Window frame */
.win {
  position: relative;
  overflow: hidden;
  background: #3c3f41;
  border-bottom: 1px solid #8c8e90;
  font-size: var(--font);
}

.win-large {
  --font: 26px;
  --title-h: 63px;
  --menu-h: 48px;
  --menu-x: 5px;
  --menu-gap: 31px;
  --tool-h: 76px;
  --tool-x: 5px;
  --tool-w: 61px;
  --tool-icon: 48px;
  --sep-w: 11px;
  --sep-h: 54px;
  --tree-h: 524px;
  --tree-w: 420px;
  --tree-x: 0px;
  --chev-w: 30px;
  --chev-size: 20px;
  --chev-gap: 12px;
  --icon: 40px;
  --icon-gap: 9px;
  --indent: 44px;
  --guide: 14px;
  --line: 2px;
  --divider: 20px;
  --input-h: 52px;
  --field-gap: 16px;
}

.win-small {
  --font: 10px;
  --title-h: 22px;
  --menu-h: 18px;
  --menu-x: 4px;
  --menu-gap: 10px;
  --tool-h: 28px;
  --tool-x: 3px;
  --tool-w: 22px;
  --tool-icon: 18px;
  --sep-w: 5px;
  --sep-h: 20px;
  --tree-h: 192px;
  --tree-w: 164px;
  --tree-x: 1px;
  --chev-w: 12px;
  --chev-size: 8px;
  --chev-gap: 4px;
  --icon: 15px;
  --icon-gap: 3px;
  --indent: 16px;
  --guide: 6px;
  --line: 1px;
  --divider: 8px;
  --input-h: 19px;
  --field-gap: 6px;
}

.shifted {
  --menu-x: 0px;
  --tool-x: 0px;
  --tree-w: 161px;
  --tree-x: -3px;
  --guide: 2px;
}

/* Title bar */
.titlebar {
  display: flex;
  align-items: center;
  height: var(--title-h);
  background: #eef3fa;
  color: #1c1c1c;
  white-space: nowrap;
}
.win-large .titlebar { padding: 0 0 4px 22px; gap: 21px; }
.win-large .feather { width: 20px; height: 34px; }
.win-small .titlebar { padding: 0 0 2px 9px; gap: 8px; font-family: "Noto Sans CJK SC", sans-serif; font-size: 9px; }
.win-small .feather { width: 8px; height: 12px; }
.shifted.win-small .titlebar { padding-left: 5px; }
.controls { display: flex; gap: 26px; margin-left: auto; padding-right: 8px; }
.controls svg { width: 10px; height: 10px; fill: none; stroke: #222; }

/* Menu and toolbar */
.menubar {
  display: flex;
  gap: var(--menu-gap);
  height: var(--menu-h);
  padding-left: var(--menu-x);
  border-bottom: var(--line) solid #515456;
}
.toolbar {
  display: flex;
  align-items: center;
  height: var(--tool-h);
  padding-left: var(--tool-x);
  border-bottom: 1px solid #323537;
}
.toolbar button { display: grid; place-items: center; flex: none; width: var(--tool-w); }
.toolbar svg { width: var(--tool-icon); height: var(--tool-icon); }
.stop-word { font: bold 8px "Liberation Sans", sans-serif; fill: #cbcbcb; }
.sep { display: grid; justify-content: center; flex: none; width: var(--sep-w); height: var(--sep-h); }
.sep::before { content: ""; width: var(--line); background: #515456; }
.status { display: flex; align-items: center; gap: 4px; margin: 0 -4px 0 auto; font-size: 9px; }
.status .clock { margin-right: 1px; }

/* Tree */
.body { display: flex; }
.tree {
  display: grid;
  grid-auto-rows: 1fr;
  flex: none;
  width: var(--tree-w);
  height: var(--tree-h);
  list-style: none;
}
.win-large .tree { margin-top: 1px; }
.tree li {
  display: flex;
  align-items: center;
  white-space: nowrap;
  background-repeat: no-repeat;
  background-size: var(--line) 100%;
}
.tree .l1 {
  padding-left: var(--indent);
  background-image: linear-gradient(#515456, #515456);
  background-position: var(--guide) 0;
}
.tree .l2 {
  padding-left: calc(var(--indent) * 2);
  background-image: linear-gradient(#515456, #515456), linear-gradient(#515456, #515456);
  background-position: var(--guide) 0, calc(var(--guide) + var(--indent)) 0;
}
.tree .selected { background-color: #0d293e; }
.tree .active { background-color: #4b6eaf; background-image: linear-gradient(#3b5480, #3b5480), linear-gradient(#6d9be0, #6d9be0); }
.chev {
  display: block;
  flex: none;
  width: var(--chev-w);
  height: var(--chev-size);
  margin: 0 var(--chev-gap) 0 var(--tree-x);
}
.ico { width: var(--icon); height: var(--icon); margin-right: var(--icon-gap); }

.divider {
  display: flex;
  align-items: flex-end;
  justify-content: center;
  flex: none;
  width: var(--divider);
  border: solid #515456;
  border-width: 0 var(--line);
}
.grip { width: 3px; height: 11px; margin-bottom: 7px; fill: #aaa; }

/* Form pane */
.pane { flex: 1; min-width: 0; }
.win-large .pane { padding-left: 22px; }
.win-large h2 { padding: 26px 0 16px; font-size: 35px; line-height: 44px; }
.win-small h2 { padding: 9px 0 4px 8px; font-size: 13px; line-height: 18px; }

.field { display: flex; align-items: center; }
.field + .field { margin-top: var(--field-gap); }
.field label { flex: none; white-space: nowrap; }
.field input, .method {
  min-width: 0;
  height: var(--input-h);
  border: var(--line) solid #646666;
  border-radius: 0;
  outline: 0;
  background: #45494a;
}
.field .grow { flex: 1; }
.win-large .field label { width: 95px; }
.win-large .field input { padding: 0 5px; border-right: 0; }
.win-small .field label { width: 35px; }
.win-small .field input { padding: 0 3px; }
.win-small .pane > .field { padding-left: 8px; }
.win-small .pane > .field label { width: 34px; }
.win-small .bleed { border-right: 0; }
.shifted .pane > .field { padding-right: 2px; }
.field .num { font-size: 9px; }

.win-small .field .w-host { width: 86px; padding-left: 5px; }
.win-small .field .w-port { width: 49px; padding-left: 5px; }
.win-small .field .w-enc { width: 59px; padding-left: 5px; }
.win-small .field .w-path { width: 40px; padding-left: 5px; }
.proto { width: 127px; }
.port { width: 153px; }
.enc { width: 80px; }
.shifted .enc { width: 62px; }
.method {
  width: 92px;
  margin-left: 2px;
  padding: 0 4px;
  appearance: none;
  background: #3f4344 url("data:image/svg+xml,%3Csvg xmlns='http://www.w3.org/2000/svg' viewBox='0 0 18 17'%3E%3Cpath d='M0 0h1v17H0z' fill='%23646666'/%3E%3Cpath d='M6 6h7l-3.500 5z' fill='%23bbb'/%3E%3C/svg%3E") right 0 / 18px 17px no-repeat;
}

fieldset { min-width: 0; margin: 0 0 5px; padding: 2px 4px 0 11px; border: 0; }
.shifted fieldset { padding-right: 7px; }
fieldset.spaced { margin-top: 8px; }
legend { display: flex; align-items: center; gap: 1px; width: 100%; height: 14px; padding: 0; line-height: 12px; white-space: nowrap; }
legend::before { content: ""; width: 2px; height: 1px; background: #515456; }
legend::after { content: ""; flex: 1; height: 1px; background: #515456; }
fieldset:last-of-type { margin-bottom: 0; }

.tabs { display: flex; gap: 1px; height: 22px; border-bottom: 1px solid #323537; }
.tabs button { height: 22px; padding: 0 3px; border-bottom: 2px solid transparent; }
.tabs .on { background: #484c4f; border-color: #747a80; }
.tabs .focus { border-color: #4a88c7; }
.tabs-main { margin-top: 4px; padding-left: 8px; }
.shifted .tabs-main { margin-top: 0; padding-left: 0; }

.splitter {
  display: grid;
  grid-template-columns: 1fr auto 1fr;
  align-items: center;
  height: 8px;
  margin-top: 4px;
  padding-left: 5px;
  border: solid #515456;
  border-width: 1px 0;
}
.splitter svg { fill: #aaa; }
.arrows { width: 16px; height: 4px; }
.dots { width: 11px; height: 3px; }

.checks { display: flex; align-items: center; height: 29px; padding-left: 9px; gap: 8px; font-size: 8px; }
.checks label { display: flex; align-items: center; gap: 5px; white-space: nowrap; }
input[type="checkbox"] {
  appearance: none;
  flex: none;
  width: 11px;
  height: 11px;
  margin: 0;
  border: 1px solid #646666;
  border-radius: 1px;
  background: #43494a;
}
input[type="checkbox"]:checked {
  background-image: url("data:image/svg+xml,%3Csvg xmlns='http://www.w3.org/2000/svg' viewBox='0 0 9 9'%3E%3Cpath d='M1.500 4.500 3.800 7 7.500 1.500' fill='none' stroke='%23bbb' stroke-width='1.200'/%3E%3C/svg%3E");
}

/* Tables */
.params { margin: 1px 1px 0 12px; }
.shifted .params { margin: 0 5px 0 12px; }
.caption { height: 20px; line-height: 22px; text-align: center; }

.grid { width: 100%; border-collapse: separate; border-spacing: 0; table-layout: fixed; }
.grid th { padding: 0; font-weight: normal; background: #45484a; border-right: 1px solid #35383a; white-space: nowrap; }
.grid td { padding: 0 4px; border: solid #4c4f51; border-width: 0 1px 1px 0; }
.grid th:last-child, .grid td:last-child { border-right: 0; }
.grid .filler td { border-bottom: 0; }
.win-small th { height: 20px; }
.win-small td { height: 17px; line-height: 16px; }
.win-small .filler td { height: 19px; }
.win-small .mid { text-align: center; }
.mid input { display: block; margin: 0 auto; }
.win-small:not(.shifted) .params { padding-bottom: 7px; }
.p-enc { width: 45px; }
.p-eq { width: 64px; }

.vars { margin-top: 68px; border-left: 2px solid #35383a; }
.vars th { height: 57px; border: solid #35383a; border-width: 2px 2px 2px 0; }
.vars td { height: 44px; padding: 0 11px; border-width: 0 2px 2px 0; }
.vars .filler td { height: 157px; }
.v-name { width: 143px; }
.v-value { width: 179px; }

/* Red remarks lying over the windows */
.note { position: absolute; color: #dd1c24; font-family: "Open Sans", "Noto Sans CJK SC", sans-serif; font-size: 24px; line-height: 38px; white-space: nowrap; }
.note-a { left: 459px; top: 401px; }
.note-b { left: 398px; top: 122px; }
.note-c { left: 413px; top: 123px; }
```
